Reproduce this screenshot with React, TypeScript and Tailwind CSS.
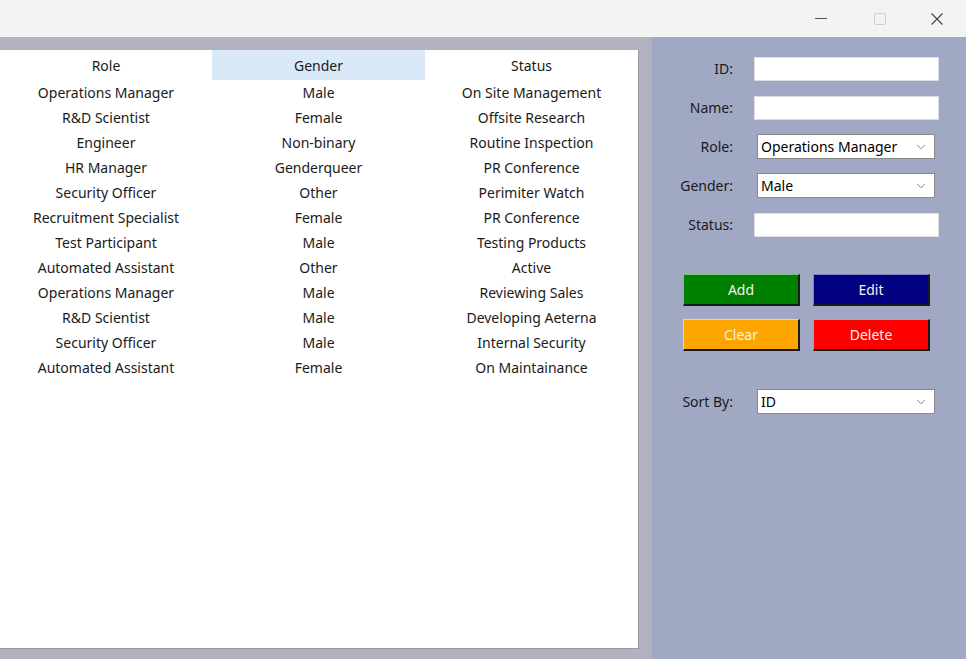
import { ChevronDown } from "lucide-react";

const ROWS = [
  ["Operations Manager", "Male", "On Site Management"],
  ["R&D Scientist", "Female", "Offsite Research"],
  ["Engineer", "Non-binary", "Routine Inspection"],
  ["HR Manager", "Genderqueer", "PR Conference"],
  ["Security Officer", "Other", "Perimiter Watch"],
  ["Recruitment Specialist", "Female", "PR Conference"],
  ["Test Participant", "Male", "Testing Products"],
  ["Automated Assistant", "Other", "Active"],
  ["Operations Manager", "Male", "Reviewing Sales"],
  ["R&D Scientist", "Male", "Developing Aeterna"],
  ["Security Officer", "Male", "Internal Security"],
  ["Automated Assistant", "Female", "On Maintainance"],
];

function Field({ label, children }: { label: string; children: React.ReactNode }) {
  return (
    <div className="flex items-center h-[39px]">
      <div className="w-[81px] text-right text-[14px] text-[#1a1a1a]">{label}</div>
      {children}
    </div>
  );
}

function TextBox() {
  return <div className="ml-[21px] w-[185px] h-[24px] bg-white border border-[#dcdce4]" />;
}

function Select({ value }: { value: string }) {
  return (
    <div className="ml-[24px] w-[178px] h-[25px] bg-white border border-[#8a8a8a] flex items-center justify-between pl-[3px] pr-[6px] text-[14px] text-black">
      <span>{value}</span>
      <ChevronDown size={14} strokeWidth={1.2} className="text-[#555]" />
    </div>
  );
}

function Btn({ label, color }: { label: string; color: string }) {
  return (
    <div className={`${color} h-[32px] flex items-center justify-center text-[14px] text-[#f2f2f2] border border-t-[#ffffff80] border-l-[#ffffff80] border-r-[#1a1a1a] border-b-[#1a1a1a] border-r-2 border-b-2`}>
      {label}
    </div>
  );
}

export default function App() {
  return (
    <div className="w-[966px] h-[659px] flex flex-col overflow-hidden" style={{ fontFamily: '"Noto Sans", sans-serif' }}>
      <div className="h-[37px] bg-[#f3f3f3] flex items-center justify-end shrink-0">
        <div className="w-[59px] flex justify-center">
          <div className="w-[12px] h-px bg-[#555]" />
        </div>
        <div className="w-[59px] flex justify-center">
          <div className="w-[12px] h-[12px] border border-[#cfcfcf] rounded-[2px]" />
        </div>
        <div className="w-[57px] flex justify-center pr-[2px]">
          <svg width="12" height="12" viewBox="0 0 12 12" stroke="#444" strokeWidth="1.1">
            <path d="M0.5 0.5L11.5 11.5M11.5 0.5L0.5 11.5" />
          </svg>
        </div>
      </div>

      <div className="flex flex-1 min-h-0">
        <div className="w-[652px] bg-[#b1b1c0] pt-[13px] pb-[10px] pr-[13px] flex">
          <div className="flex-1 bg-white border-r border-b border-[#9a9aa6] flex flex-col text-[14px] text-[#1a1a1a]">
            <div className="grid grid-cols-[212px_213px_213px] h-[30px]">
              <div className="flex items-center justify-center">Role</div>
              <div className="flex items-center justify-center bg-[#d9e9f7]">Gender</div>
              <div className="flex items-center justify-center">Status</div>
            </div>
            {ROWS.map((r, i) => (
              <div key={i} className="grid grid-cols-[212px_213px_213px] h-[25px]">
                {r.map((c, j) => (
                  <div key={j} className="flex items-center justify-center whitespace-nowrap">{c}</div>
                ))}
              </div>
            ))}
          </div>
        </div>

        <div className="flex-1 bg-[#a1a8c4] pt-[12px]">
          <Field label="ID:"><TextBox /></Field>
          <Field label="Name:"><TextBox /></Field>
          <Field label="Role:"><Select value="Operations Manager" /></Field>
          <Field label="Gender:"><Select value="Male" /></Field>
          <Field label="Status:"><TextBox /></Field>

          <div className="ml-[31px] mt-[30px] grid grid-cols-[117px_117px] gap-[13px] w-fit">
            <Btn label="Add" color="bg-[#008000]" />
            <Btn label="Edit" color="bg-[#000080]" />
            <Btn label="Clear" color="bg-[#ffa500]" />
            <Btn label="Delete" color="bg-[#ff0000]" />
          </div>

          <div className="mt-[31px]">
            <Field label="Sort By:"><Select value="ID" /></Field>
          </div>
        </div>
      </div>
    </div>
  );
}
